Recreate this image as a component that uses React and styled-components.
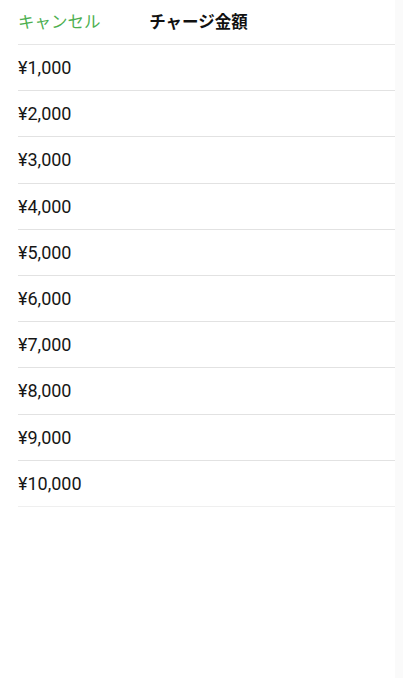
import React from 'react';
import styled, { createGlobalStyle } from 'styled-components';

const GlobalStyle = createGlobalStyle`
  html, body {
    margin: 0;
    padding: 0;
    background: #ffffff;
  }
  body {
    font-family: Roboto, 'Noto Sans CJK JP', sans-serif;
    color: #111111;
  }
`;

const Page = styled.div`
  display: flex;
  height: 678px;
  width: 403px;
`;

const Sheet = styled.div`
  width: 395px;
  padding-left: 18px;
  box-sizing: border-box;
  background: #ffffff;
`;

const Gutter = styled.div`
  flex: 1;
  background: #fafafa;
`;

const Header = styled.div`
  display: grid;
  grid-template-columns: 1fr auto 1fr;
  align-items: center;
  height: 45px;
  padding-right: 16px;
  box-sizing: border-box;
  border-bottom: 1px solid #e6e6e6;
`;

const Cancel = styled.button`
  justify-self: start;
  padding: 0;
  border: none;
  background: none;
  font-family: 'Noto Sans CJK JP', sans-serif;
  font-size: 16.5px;
  color: #4caf50;
  cursor: pointer;
  margin-top: -3px;
`;

const Title = styled.h1`
  margin: -3px 0 0;
  font-family: 'Noto Sans CJK JP', sans-serif;
  font-size: 16.5px;
  font-weight: 700;
  color: #111111;
`;

const List = styled.ul`
  list-style: none;
  margin: 0;
  padding: 0;
`;

const Row = styled.li`
  display: flex;
  align-items: center;
  height: 46.2px;
  box-sizing: border-box;
  border-bottom: 1px solid ${({ $last }) => ($last ? '#efefef' : '#e2e2e2')};
  font-size: 18px;
  color: #161616;
  cursor: pointer;
`;

const amounts = [1000, 2000, 3000, 4000, 5000, 6000, 7000, 8000, 9000, 10000];

function App() {
  return (
    <Page>
      <GlobalStyle />
      <Sheet>
        <Header>
          <Cancel>キャンセル</Cancel>
          <Title>チャージ金額</Title>
          <span />
        </Header>
        <List>
          {amounts.map((a, i) => (
            <Row key={a} $last={i === amounts.length - 1}>
              ¥{a.toLocaleString('en-US')}
            </Row>
          ))}
        </List>
      </Sheet>
      <Gutter />
    </Page>
  );
}

export default App;
